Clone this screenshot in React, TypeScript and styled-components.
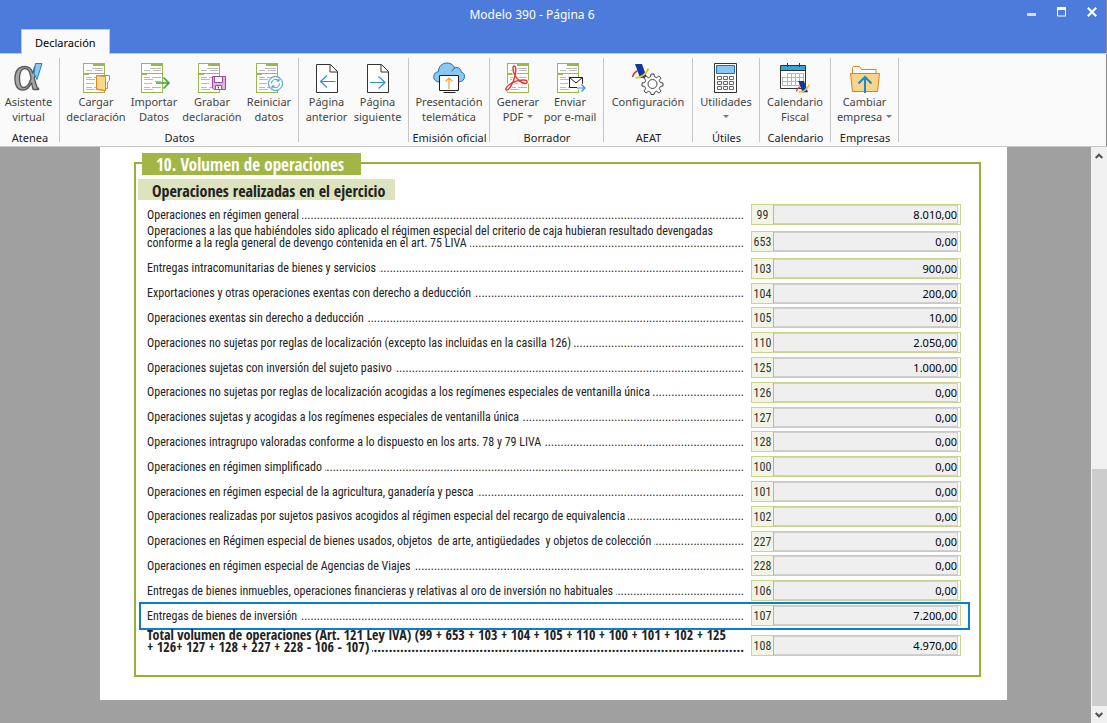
import React from "react";
import styled, { createGlobalStyle } from "styled-components";

const GlobalStyle = createGlobalStyle`
  *, *::before, *::after { box-sizing: border-box; }
  body {
    margin: 0;
    background: #a0a0a0;
    font-family: "Noto Sans", "Segoe UI", sans-serif;
    font-size: 11px;
    color: #444;
  }
  button, input { font: inherit; color: inherit; margin: 0; padding: 0; border: 0; background: none; }
`;

const narrow = `"Roboto Condensed", "Arial Narrow", sans-serif`;
const narrowBold = `"Open Sans Condensed", "Arial Narrow", sans-serif`;

const Window = styled.div`
  display: flex;
  flex-direction: column;
  min-height: 100vh;
`;

const Header = styled.header`
  background: #4c7bdb;
  border-bottom: 1px solid #c6c6c6;
  box-shadow: inset -1px 0 #8a8a8a;
`;

const TitleBar = styled.div`
  display: flex;
  height: 29px;
  padding-left: 47px;
`;

const WindowTitle = styled.h1`
  flex: 1;
  margin: 0;
  font-size: 12px;
  font-weight: 400;
  line-height: 29px;
  text-align: center;
  color: #fff;
`;

const WindowButtons = styled.div`
  display: flex;
`;

const WindowButton = styled.button`
  display: flex;
  align-items: center;
  justify-content: center;
  width: 30px;
  height: 24px;
`;

const TabList = styled.div`
  display: flex;
  padding-left: 21px;
`;

const Tab = styled.button`
  height: 25px;
  padding: 0 13px;
  margin-bottom: -1px;
  border: 1px solid #c6c6c6;
  border-bottom: 0;
  background: #fafafa;
  color: #000;
`;

const Ribbon = styled.nav`
  display: flex;
  height: 93px;
  padding-top: 4px;
  background: #fafafa;
  border-bottom: 1px solid #c6c6c6;
  box-shadow: inset -1px 0 #8a8a8a;
`;

const Group = styled.section<{ $width: number; $inset: number }>`
  position: relative;
  display: flex;
  flex-direction: column;
  flex: none;
  width: ${(p) => p.$width}px;
  &::after {
    content: "";
    position: absolute;
    top: 0;
    right: 0;
    width: 1px;
    height: 84px;
    background: #c6c6c6;
  }
  > div { padding-left: ${(p) => p.$inset}px; }
`;

const GroupItems = styled.div`
  display: flex;
  height: 72px;
`;

const GroupCaption = styled.h2`
  margin: 0;
  font-size: 11px;
  font-weight: 400;
  line-height: 16px;
  text-align: center;
  white-space: nowrap;
  color: #222;
`;

const Tool = styled.button<{ $width: number }>`
  display: flex;
  flex-direction: column;
  align-items: center;
  flex: none;
  width: ${(p) => p.$width}px;
  padding-top: 4px;
  line-height: 15px;
  white-space: nowrap;
  svg.icon { width: 32px; height: 32px; flex: none; overflow: visible; }
`;

const ToolLine = styled.span`
  display: flex;
  align-items: center;
  gap: 4px;
  height: 15px;
`;

const Caret = styled.i`
  border: 3px solid transparent;
  border-top-color: #777;
  border-bottom: 0;
`;

const Workspace = styled.div`
  display: flex;
  flex: 1;
`;

const Desk = styled.main`
  flex: 1;
  min-width: 0;
  padding: 0 84px 23px 100px;
  background: #a0a0a0;
`;

const Sheet = styled.form`
  padding: 15px 26px 23px 34px;
  background: #fff;
`;

const Frame = styled.section`
  height: 515px;
  border: 2px solid #9aae38;
`;

const SectionTitle = styled.h2`
  width: 219px;
  height: 22px;
  margin: -11px 0 4px 6px;
  padding-left: 14px;
  background: #a2b646;
  color: #fff;
  font: bold 17px/24px ${narrowBold};
  white-space: nowrap;
`;

const SectionSubtitle = styled.h3`
  width: 257px;
  height: 21px;
  margin: 0 0 4px 2px;
  padding-left: 14px;
  background: #dce3bd;
  color: #222;
  font: bold 16px/25px ${narrowBold};
  white-space: nowrap;
`;

const Rows = styled.div`
  padding: 0 18px 0 11px;
`;

const EvenRows = styled.div`
  display: grid;
  grid-template-columns: minmax(0, 1fr);
  grid-auto-rows: 1fr;
  height: 377px;
  padding: 4px 0 1px;
`;

const Row = styled.div<{ $tall?: boolean; $marked?: boolean }>`
  position: relative;
  display: flex;
  align-items: ${(p) => (p.$tall ? "flex-start" : "center")};
  height: ${(p) => (p.$tall ? "27px" : "auto")};
  &::after {
    content: "";
    display: ${(p) => (p.$marked ? "block" : "none")};
    position: absolute;
    inset: -1px -9px -2px -8px;
    border: 2px solid #0a7fc9;
    pointer-events: none;
  }
`;

const Label = styled.label<{ $bold?: boolean }>`
  flex: 1;
  min-width: 0;
  margin-right: 7px;
  font: ${(p) => (p.$bold ? `bold 14px/12px ${narrowBold}` : `12px/12px ${narrow}`)};
  color: #222;
  white-space: pre;
`;

const LeaderLine = styled.span`
  display: flex;
`;

const Leader = styled.span`
  flex: 1;
  min-width: 0;
  margin-left: 3px;
  overflow: hidden;
  direction: rtl;
  &::after { content: "${".".repeat(220)}"; }
`;

const Cell = styled.div<{ $low?: boolean }>`
  display: flex;
  flex: none;
  align-self: ${(p) => (p.$low ? "flex-end" : "center")};
  width: 210px;
  height: 21px;
  border: 1px solid #c9d58e;
  background: #fff;
`;

const Code = styled.span`
  width: 22px;
  border-right: 1px solid #b4c462;
  background: #f2f5e6;
  font: 12px/20px ${narrow};
  text-align: center;
  color: #333;
`;

const Amount = styled.input`
  flex: 1;
  min-width: 0;
  margin-right: 2px;
  border: 1px solid #cfcfcf;
  border-left: 0;
  background: #efefef;
  text-align: right;
  color: #000;
`;

const ScrollTrack = styled.div`
  display: flex;
  flex-direction: column;
  flex: none;
  width: 16px;
  background: #f0f0f0;
`;

const ScrollButton = styled.button`
  display: flex;
  align-items: center;
  justify-content: center;
  height: 17px;
`;

const ScrollSpace = styled.div`
  flex: 305;
`;

const ScrollThumb = styled.div`
  flex: 237;
  margin-left: 1px;
  background: #cdcdcd;
`;

const Svg = ({ children }: { children: React.ReactNode }) => (
  <svg className="icon" viewBox="0 0 32 32" fill="none" aria-hidden="true">{children}</svg>
);

const Doc = ({ x = 3 }: { x?: number }) => (
  <g transform={`translate(${x} 1)`}>
    <rect x=".5" y=".5" width="21" height="29" fill="#fff" stroke="#97ba4e" />
    <path d="M10 0h12v3H10zM0 10h22v1H0zM0 11h6v1H0z" fill="#97ba4e" />
    <path d="M9 5.500h11M3 7.500h6M12 7.500h8M3 14.500h6M11 14.500h9M3 16.500h9M14 18.500h6M3 20.500h8M3 24.500h6M11 24.500h9M3 26.500h9" stroke="#b9b9b9" />
  </g>
);

const Page = ({ children }: { children: React.ReactNode }) => (
  <Svg>
    <path d="M5.500 2.500h14l7 7v21h-21z" fill="#fff" stroke="#333" />
    <path d="M19 2.500v7.500h7.500" stroke="#333" />
    {children}
  </Svg>
);

const AgencyMark = () => (
  <>
    <path d="M3 0h7l5 14H8z" fill="#0e3a9c" />
    <path d="M6 6.500C3 8 1 10 .7 13" stroke="#e0303a" strokeWidth="1.600" />
    <path d="M3.500 14C9 14 14 10 16.500 4.500" stroke="#f6c51b" strokeWidth="2" />
  </>
);

const icons: Record<string, React.ReactNode> = {
  alpha: (
    <Svg>
      <text x="0" y="28" fontFamily="Liberation Serif, serif" fontSize="51" fill="#a8a8a8" stroke="#5c5c5c" strokeWidth="1.400">α</text>
      <path d="M22.500 1.500h6.500l-5 16-3-6z" fill="#8cc8f0" stroke="#1f7fc4" />
    </Svg>
  ),
  load: (
    <Svg>
      <Doc />
      <path d="M16.500 13.500h13v5l-2 2v6h-2v2l-9-1z" fill="#fff" stroke="#e8812a" />
      <path d="M16.500 13.500l9 1v14l-9-1.500z" fill="#f8d98c" stroke="#e8812a" />
    </Svg>
  ),
  importData: (
    <Svg>
      <Doc />
      <path d="M18 21h13M25.500 15.500l5.500 5.500-5.500 5.500" stroke="#3fa535" strokeWidth="1.600" />
    </Svg>
  ),
  save: (
    <Svg>
      <Doc x={2} />
      <path d="M16.500 14.500h13v13h-11.500l-1.500-1.500z" fill="#dcb4dc" stroke="#9b4a9b" />
      <path d="M18.500 14.500h8v6h-8zM19.500 23.500h6v4h-6z" fill="#fff" stroke="#9b4a9b" />
      <path d="M21.500 25h1v1.500" stroke="#333" />
    </Svg>
  ),
  reset: (
    <Svg>
      <Doc />
      <circle cx="22.500" cy="21.500" r="7" fill="#fff" stroke="#2e8fd0" />
      <path d="M18.500 21.500c0-4 5-5.500 7.500-2.500v-2.500M26 19h-2.500M26.500 21.500c0 4-5 5.500-7.500 2.500v2.500M19 24h2.500" stroke="#2e8fd0" />
    </Svg>
  ),
  prev: <Page><path d="M24.500 19.500H10M16 13.500l-6.500 6 6.500 6" stroke="#2e8fd0" strokeWidth="1.200" /></Page>,
  next: <Page><path d="M8 20.500h14.500M16.500 14.500l6.500 6-6.500 6" stroke="#2e8fd0" strokeWidth="1.200" /></Page>,
  cloud: (
    <Svg>
      <path d="M6 20C2 19.500.5 17 .7 14.500.9 11.500 3 9.800 5.500 9.700 5.500 4.500 9 1 14 1c4 0 6.500 2 7.700 5 2.300-1.200 6.300 0 6.500 4 2 .5 3.300 2 3.300 4.500 0 3-2 5-5.500 5.500z" fill="#8dc6ef" stroke="#1c6fb2" />
      <path d="M22 6c-1.500.6-2.600 1.800-3 3.500" stroke="#1c6fb2" />
      <path d="M6.500 13.500h19v15h-19z" fill="#fff" stroke="#222" />
      <path d="M10.500 30.500h12" stroke="#222" />
      <path d="M16 27V16.500M12.500 19.500l3.500-3.500 3.500 3.500" stroke="#f0a030" strokeWidth="1.200" />
    </Svg>
  ),
  pdf: (
    <Svg>
      <Doc x={5} />
      <path d="M12.300 4C10.300 4 10.800 9 12.500 12.500 15 17.500 20 21.500 23 21.500c3 0 3-3.500-1-3.500-5 0-11 2-14.500 4.500C4 25 3 27.500 4.500 28 7 28.500 11 21 12.500 16 14 11 14.500 4 12.300 4z" stroke="#fff" strokeWidth="3.500" />
      <path d="M12.300 4C10.300 4 10.800 9 12.500 12.500 15 17.500 20 21.500 23 21.500c3 0 3-3.500-1-3.500-5 0-11 2-14.500 4.500C4 25 3 27.500 4.500 28 7 28.500 11 21 12.500 16 14 11 14.500 4 12.300 4z" fill="#fff" stroke="#e5322d" strokeWidth="1.400" />
    </Svg>
  ),
  mail: (
    <Svg>
      <Doc />
      <path d="M15.500 15.500h13v10h-13z" fill="#fff" stroke="#222" />
      <path d="M15.500 15.500l6.500 5.500 6.500-5.500" stroke="#222" />
      <path d="M23 26h8M27.500 22.500L31 26l-3.500 3.500" stroke="#fff" strokeWidth="3" />
      <path d="M23 26h8M27.500 22.500L31 26l-3.500 3.500" stroke="#2e8fd0" strokeWidth="1.200" />
    </Svg>
  ),
  settings: (
    <Svg>
      <g transform="translate(0 2)"><AgencyMark /></g>
      <path d="M18.600 14.700l.4-2.700h3l.4 2.700 2.300 1 2.200-1.700 2.100 2.100-1.700 2.200 1 2.300 2.700.4v3l-2.700.4-1 2.300 1.700 2.200-2.100 2.100-2.200-1.700-2.300 1-.4 2.200h-3l-.4-2.200-2.300-1-2.200 1.700-2.100-2.100 1.700-2.200-1-2.300-2.700-.4v-3l2.700-.4 1-2.300-1.700-2.200 2.100-2.100 2.200 1.700z" fill="#fff" stroke="#444" />
      <circle cx="20.500" cy="22" r="4.500" stroke="#444" />
    </Svg>
  ),
  calculator: (
    <Svg>
      <path d="M4.500 1.500h22v29h-22z" fill="#fff" stroke="#333" />
      <path d="M6.500 3.500h18v8h-18z" fill="#8dc6ef" stroke="#1c6fb2" />
      <path d="M7.500 14.500h4v3h-4zM13.500 14.500h4v3h-4zM19.500 14.500h4v3h-4zM7.500 19.500h4v3h-4zM13.500 19.500h4v3h-4zM19.500 19.500h4v3h-4zM7.500 24.500h4v3h-4zM13.500 24.500h4v3h-4zM19.500 24.500h4v3h-4z" stroke="#666" />
    </Svg>
  ),
  calendar: (
    <Svg>
      <path d="M1.500 3.500h25v23h-25z" fill="#fff" stroke="#333" />
      <path d="M2 4h24v4H2z" fill="#33a5da" />
      <path d="M1.500 8.500h25" stroke="#333" />
      <path d="M8.500 1v4M20.500 1v4" stroke="#333" />
      <path d="M8.500 11.500h16M3.500 15.500h21M3.500 19.500h21M3.500 23.500h17M3.500 15v8.500M8.500 11v12.500M12.500 11v12.500M16.500 11v12.500M20.500 11v12.500M24.500 11v9" stroke="#b5b5b5" />
      <g transform="translate(17 19) scale(.8)"><AgencyMark /></g>
    </Svg>
  ),
  company: (
    <Svg>
      <path d="M3.500 11V5.500l1-1h6l2 3h14.500v3.500" fill="#fff" stroke="#e07b28" />
      <path d="M1.500 11.500h29l-2 18h-25z" fill="#f6d68c" stroke="#e07b28" />
      <path d="M16 31V15.500M9.500 21.500L16 15l6.500 6.500" stroke="#2585c7" strokeWidth="2" />
    </Svg>
  ),
};

type ToolDef = { icon: string; lines: [string, string]; width: number; menu?: boolean };
type GroupDef = { caption: string; width: number; inset: number; tools: ToolDef[] };

const groups: GroupDef[] = [
  { caption: "Atenea", width: 60, inset: 0, tools: [{ icon: "alpha", lines: ["Asistente", "virtual"], width: 57 }] },
  {
    caption: "Datos", width: 239, inset: 7, tools: [
      { icon: "load", lines: ["Cargar", "declaración"], width: 58 },
      { icon: "importData", lines: ["Importar", "Datos"], width: 58 },
      { icon: "save", lines: ["Grabar", "declaración"], width: 58 },
      { icon: "reset", lines: ["Reiniciar", "datos"], width: 56 },
    ],
  },
  {
    caption: "", width: 110, inset: 2, tools: [
      { icon: "prev", lines: ["Página", "anterior"], width: 51 },
      { icon: "next", lines: ["Página", "siguiente"], width: 51 },
    ],
  },
  { caption: "Emisión oficial", width: 81, inset: 0, tools: [{ icon: "cloud", lines: ["Presentación", "telemática"], width: 80 }] },
  {
    caption: "Borrador", width: 114, inset: 2, tools: [
      { icon: "pdf", lines: ["Generar", "PDF"], width: 52, menu: true },
      { icon: "mail", lines: ["Enviar", "por e-mail"], width: 52 },
    ],
  },
  { caption: "AEAT", width: 89, inset: 0, tools: [{ icon: "settings", lines: ["Configuración", ""], width: 88 }] },
  { caption: "Útiles", width: 67, inset: 0, tools: [{ icon: "calculator", lines: ["Utilidades", ""], width: 66, menu: true }] },
  { caption: "Calendario", width: 71, inset: 0, tools: [{ icon: "calendar", lines: ["Calendario", "Fiscal"], width: 70 }] },
  { caption: "Empresas", width: 68, inset: 0, tools: [{ icon: "company", lines: ["Cambiar", "empresa"], width: 67, menu: true }] },
];

type Entry = { code: string; text: string[]; amount: string; marked?: boolean };

const first: Entry[] = [
  { code: "99", text: ["Operaciones en régimen general"], amount: "8.010,00" },
  {
    code: "653",
    text: [
      "Operaciones a las que habiéndoles sido aplicado el régimen especial del criterio de caja hubieran resultado devengadas",
      "conforme a la regla general de devengo contenida en el art. 75 LIVA",
    ],
    amount: "0,00",
  },
];

const entries: Entry[] = [
  { code: "103", text: ["Entregas intracomunitarias de bienes y servicios"], amount: "900,00" },
  { code: "104", text: ["Exportaciones y otras operaciones exentas con derecho a deducción"], amount: "200,00" },
  { code: "105", text: ["Operaciones exentas sin derecho a deducción"], amount: "10,00" },
  { code: "110", text: ["Operaciones no sujetas por reglas de localización (excepto las incluidas en la casilla 126)"], amount: "2.050,00" },
  { code: "125", text: ["Operaciones sujetas con inversión del sujeto pasivo"], amount: "1.000,00" },
  { code: "126", text: ["Operaciones no sujetas por reglas de localización acogidas a los regímenes especiales de ventanilla única"], amount: "0,00" },
  { code: "127", text: ["Operaciones sujetas y acogidas a los regímenes especiales de ventanilla única"], amount: "0,00" },
  { code: "128", text: ["Operaciones intragrupo valoradas conforme a lo dispuesto en los arts. 78 y 79 LIVA"], amount: "0,00" },
  { code: "100", text: ["Operaciones en régimen simplificado"], amount: "0,00" },
  { code: "101", text: ["Operaciones en régimen especial de la agricultura, ganadería y pesca"], amount: "0,00" },
  { code: "102", text: ["Operaciones realizadas por sujetos pasivos acogidos al régimen especial del recargo de equivalencia"], amount: "0,00" },
  { code: "227", text: ["Operaciones en Régimen especial de bienes usados, objetos  de arte, antigüedades  y objetos de colección"], amount: "0,00" },
  { code: "228", text: ["Operaciones en régimen especial de Agencias de Viajes"], amount: "0,00" },
  { code: "106", text: ["Entregas de bienes inmuebles, operaciones financieras y relativas al oro de inversión no habituales"], amount: "0,00" },
  { code: "107", text: ["Entregas de bienes de inversión"], amount: "7.200,00", marked: true },
];

const total: Entry = {
  code: "108",
  text: [
    "Total volumen de operaciones (Art. 121 Ley IVA) (99 + 653 + 103 + 104 + 105 + 110 + 100 + 101 + 102 + 125",
    "+ 126+ 127 + 128 + 227 + 228 - 106 - 107)",
  ],
  amount: "4.970,00",
};

const EntryRow = ({ entry, bold }: { entry: Entry; bold?: boolean }) => {
  const tall = entry.text.length > 1;
  return (
    <Row $tall={tall} $marked={entry.marked}>
      <Label htmlFor={`c${entry.code}`} $bold={bold}>
        {entry.text.map((line, i) => (
          <LeaderLine key={i}>
            <span>{line}</span>
            {i === entry.text.length - 1 && <Leader aria-hidden="true" />}
          </LeaderLine>
        ))}
      </Label>
      <Cell $low={tall}>
        <Code>{entry.code}</Code>
        <Amount id={`c${entry.code}`} type="text" readOnly value={entry.amount} />
      </Cell>
    </Row>
  );
};

export default function App() {
  return (
    <Window>
      <GlobalStyle />
      <Header>
        <TitleBar>
          <WindowTitle>Modelo 390 - Página 6</WindowTitle>
          <WindowButtons>
            <WindowButton aria-label="Minimizar">
              <svg width="10" height="10"><path d="M0 6h9v3H0z" fill="#d9dce4" /></svg>
            </WindowButton>
            <WindowButton aria-label="Maximizar">
              <svg width="10" height="10" fill="none"><path d="M.5 1v8h8V1" stroke="#fff" /><path d="M0 0h9v3H0z" fill="#fff" /></svg>
            </WindowButton>
            <WindowButton aria-label="Cerrar">
              <svg width="10" height="10"><path d="M.8.8l8.400 8.400M9.200.8L.8 9.200" stroke="#fff" strokeWidth="2.200" /></svg>
            </WindowButton>
          </WindowButtons>
        </TitleBar>
        <TabList role="tablist">
          <Tab role="tab" aria-selected="true">Declaración</Tab>
        </TabList>
      </Header>
      <Ribbon>
        {groups.map((g, i) => (
          <Group key={i} $width={g.width} $inset={g.inset}>
            <GroupItems>
              {g.tools.map((t) => (
                <Tool key={t.icon} $width={t.width} type="button">
                  {icons[t.icon]}
                  <ToolLine>{t.lines[0]}</ToolLine>
                  <ToolLine>{t.lines[1]}{t.menu && <Caret />}</ToolLine>
                </Tool>
              ))}
            </GroupItems>
            {g.caption && <GroupCaption>{g.caption}</GroupCaption>}
          </Group>
        ))}
      </Ribbon>
      <Workspace>
        <Desk>
          <Sheet>
            <Frame>
              <SectionTitle>10. Volumen de operaciones</SectionTitle>
              <SectionSubtitle>Operaciones realizadas en el ejercicio</SectionSubtitle>
              <Rows>
                {first.map((e) => <EntryRow key={e.code} entry={e} />)}
                <EvenRows>
                  {entries.map((e) => <EntryRow key={e.code} entry={e} />)}
                </EvenRows>
                <EntryRow entry={total} bold />
              </Rows>
            </Frame>
          </Sheet>
        </Desk>
        <ScrollTrack>
          <ScrollButton aria-label="Subir">
            <svg width="8" height="6" fill="none"><path d="M.7 5L4 1.700 7.300 5" stroke="#505050" strokeWidth="2" /></svg>
          </ScrollButton>
          <ScrollSpace />
          <ScrollThumb />
          <ScrollButton aria-label="Bajar">
            <svg width="8" height="6" fill="none"><path d="M.7 1L4 4.300 7.300 1" stroke="#505050" strokeWidth="2" /></svg>
          </ScrollButton>
        </ScrollTrack>
      </Workspace>
    </Window>
  );
}
